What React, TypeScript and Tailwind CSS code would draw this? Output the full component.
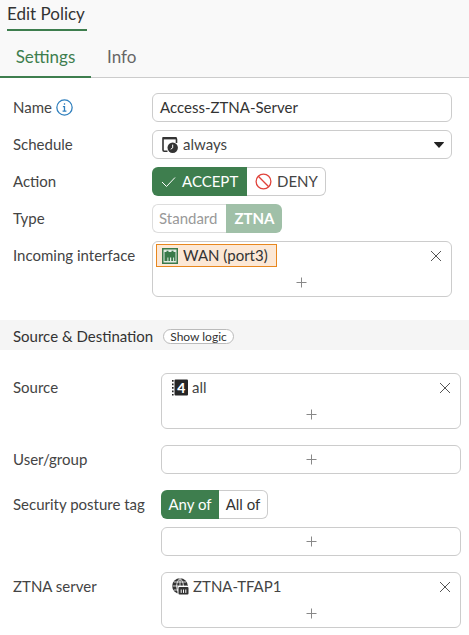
import React from 'react';

const labelCls = 'w-[139px] shrink-0 text-[15px] text-[#444]';
const boxCls = 'border border-[#ccc] rounded-[6px] bg-white';

const XIcon = () => (
  <svg width="12" height="12" viewBox="0 0 12 12" fill="none" stroke="#555" strokeWidth="1">
    <path d="M1 1l10 10M11 1L1 11" />
  </svg>
);

const PlusIcon = () => (
  <svg width="11" height="11" viewBox="0 0 11 11" fill="none" stroke="#888" strokeWidth="1">
    <path d="M5.5 0.5v10M0.5 5.5h10" />
  </svg>
);

const ClockIcon = () => (
  <svg width="16" height="17" viewBox="0 0 16 17">
    <path d="M5.5 15.2H2.2A1.2 1.2 0 0 1 1 14V2h12.3A1.2 1.2 0 0 1 14.5 3.2V7" fill="none" stroke="#333" strokeWidth="1.6" />
    <rect x="1" y="1" width="13.5" height="2.4" fill="#333" />
    <circle cx="10.7" cy="11.8" r="5.2" fill="#333" />
    <path d="M10.7 8.6v3.3l-2 1.3" fill="none" stroke="#fff" strokeWidth="1" />
  </svg>
);

const WanIcon = () => (
  <svg width="16" height="16" viewBox="0 0 16 16">
    <rect x="0.75" y="0.75" width="14.5" height="14.5" fill="#dfeae2" stroke="#3a7a4a" strokeWidth="1.5" />
    <path d="M2.5 4h2V2.8h2V4h3V2.8h2V4h2v9h-1.4V9.5h-1V13H9.2V9.5H8V13H6.4V9.5h-1V13H2.5z" fill="#3a7a4a" />
  </svg>
);

const AddressIcon = () => (
  <svg width="16" height="17" viewBox="0 0 16 17">
    <rect x="2.5" y="0.5" width="13.5" height="16" rx="1" fill="#262626" />
    <path d="M0.8 1v1.8M0.8 4.5v1.8M0.8 8v1.8M0.8 11.5v1.8M0.8 15v1.5" stroke="#262626" strokeWidth="1.6" />
    <text x="9.3" y="13.5" textAnchor="middle" fontSize="14" fontWeight="900" fill="#fff" fontFamily="Lato, sans-serif">4</text>
  </svg>
);

const ServerIcon = () => (
  <svg width="17" height="17" viewBox="0 0 17 17">
    <circle cx="8" cy="8" r="7.8" fill="#333" />
    <path d="M0.5 8h15M8 0.5v15M2 4h12M2 12h12M8 0.5C3.5 4 3.5 12 8 15.5M8 0.5c4.5 3.5 4.5 11.5 0 15" fill="none" stroke="#fff" strokeWidth="0.8" />
    <rect x="5.5" y="8" width="11.5" height="9" rx="1" fill="#fff" />
    <rect x="6.5" y="9" width="10" height="7.5" rx="1" fill="#333" />
    <path d="M9.2 11.5v3.4M11.5 11.5v3.4M13.8 11.5v3.4" stroke="#fff" strokeWidth="1" />
  </svg>
);

const Row = ({ label, children, className = '' }: { label: React.ReactNode; children: React.ReactNode; className?: string }) => (
  <div className={`flex items-start ${className}`}>
    <div className={`${labelCls} h-[29px] flex items-center`}>{label}</div>
    <div className="flex-1 min-w-0">{children}</div>
  </div>
);

const AddBox = ({ children, width = 'w-[300px]' }: { children?: React.ReactNode; width?: string }) => (
  <div className={`${boxCls} ${width} ${children ? 'h-[56px]' : 'h-[29px]'} relative flex flex-col`}>
    {children && (
      <div className="h-[27px] flex items-center justify-between pl-[10px] pr-[9px]">
        {children}
        <XIcon />
      </div>
    )}
    <div className="flex-1 flex items-center justify-center">
      <PlusIcon />
    </div>
  </div>
);

export default function App() {
  return (
    <div className="w-[469px] h-[635px] overflow-hidden bg-white font-['Lato',sans-serif] text-[15px] text-[#444]">
      <div className="bg-[#f9f9f9] h-[78px] border-b border-[#ccc] relative">
        <div className="h-[31px] pl-[7px]">
          <div className="w-[80px] h-[31px] border-b-2 border-[#3e7e4e] text-[17px] leading-[28px] text-[#333]">Edit Policy</div>
        </div>
        <div className="flex h-[47px]">
          <div className="w-[91px] h-[47px] border-b-2 border-[#3e7e4e] text-[#3e7e4e] text-[17px] text-center leading-[52px]">Settings</div>
          <div className="pl-[16px] text-[#666] text-[17px] leading-[52px]">Info</div>
        </div>
      </div>

      <div className="pl-[13px] pt-[15px] flex flex-col gap-[8px]">
        <Row label={
          <span className="flex items-center gap-[4px]">
            Name
            <svg width="17" height="17" viewBox="0 0 16 16" fill="none">
              <circle cx="8" cy="8" r="7.2" stroke="#2f7fbd" strokeWidth="1.2" />
              <path d="M8 4v1.4M6.5 7.2H8v4.3M6.2 11.5h3.6" stroke="#2f7fbd" strokeWidth="1.2" />
            </svg>
          </span>
        }>
          <div className={`${boxCls} w-[300px] h-[29px] flex items-center pl-[7px] text-[#333]`}>Access-ZTNA-Server</div>
        </Row>
        <Row label="Schedule">
          <div className={`${boxCls} w-[300px] h-[29px] flex items-center justify-between pl-[9px] pr-[7px]`}>
            <span className="flex items-center gap-[5px]"><ClockIcon />always</span>
            <svg width="10" height="6" viewBox="0 0 10 6"><path d="M0.5 0h9a0.5 0.5 0 0 1 0.3 0.8L5 6 0.2 0.8A0.5 0.5 0 0 1 0.5 0z" fill="#222" /></svg>
          </div>
        </Row>
        <Row label="Action">
          <div className="flex h-[29px] w-fit">
            <div className="w-[95px] bg-[#3e7e4e] rounded-l-[6px] text-white flex items-center pl-[9px] gap-[6px]">
              <svg width="15" height="12" viewBox="0 0 15 12" fill="none" stroke="#fff" strokeWidth="1"><path d="M1 6l4.5 4.5L14 1.5" /></svg>
              ACCEPT
            </div>
            <div className="w-[79px] border border-l-0 border-[#ccc] rounded-r-[6px] flex items-center pl-[8px] gap-[5px]">
              <svg width="17" height="17" viewBox="0 0 17 17" fill="none" stroke="#e0433b" strokeWidth="1.3"><circle cx="8.5" cy="8.5" r="7.4" /><path d="M3.3 3.3l10.4 10.4" /></svg>
              DENY
            </div>
          </div>
        </Row>
        <Row label="Type">
          <div className="flex h-[29px] w-fit">
            <div className="w-[74px] border border-r-0 border-[#ddd] rounded-l-[6px] text-[#999] flex items-center pl-[6px]">Standard</div>
            <div className="w-[56px] bg-[#a0c0a8] rounded-r-[6px] text-white font-bold flex items-center justify-center pl-px">ZTNA</div>
          </div>
        </Row>
        <Row label="Incoming interface">
          <div className={`${boxCls} w-[300px] h-[56px] flex flex-col`}>
            <div className="h-[27px] flex items-center justify-between pl-[3px] pr-[9px]">
              <span className="h-[23px] w-[121px] bg-[#fce8d6] border border-[#e8871e] flex items-center pl-[5px] gap-[5px] text-[#333]"><WanIcon />WAN (port3)</span>
              <XIcon />
            </div>
            <div className="flex-1 flex items-center justify-center pr-[2px]"><PlusIcon /></div>
          </div>
        </Row>
      </div>

      <div className="mt-[23px] h-[30px] bg-[#f5f5f5] pl-[13px] pt-[2px] flex items-center gap-[10px] text-[#333]">
        Source &amp; Destination
        <span className="h-[15px] px-[6px] border border-[#bbb] rounded-[8px] text-[12px] leading-[13px] bg-white">Show logic</span>
      </div>

      <div className="pl-[13px] pt-[23px] flex flex-col gap-[16px]">
        <Row label="Source" className="[&>div:first-child]:w-[148px]">
          <AddBox>
            <span className="flex items-center gap-[4px]"><AddressIcon />all</span>
          </AddBox>
        </Row>
        <Row label="User/group" className="[&>div:first-child]:w-[148px]">
          <AddBox />
        </Row>
        <div className="flex flex-col gap-[8px]">
          <Row label="Security posture tag" className="[&>div:first-child]:w-[148px]">
            <div className="flex h-[29px] w-fit">
              <div className="w-[58px] bg-[#3e7e4e] rounded-l-[6px] text-white flex items-center justify-center">Any of</div>
              <div className="w-[49px] border border-l-0 border-[#ccc] rounded-r-[6px] flex items-center justify-center text-[#333]">All of</div>
            </div>
          </Row>
          <div className="pl-[148px]"><AddBox /></div>
        </div>
        <Row label="ZTNA server" className="[&>div:first-child]:w-[148px]">
          <AddBox>
            <span className="flex items-center gap-[4px]"><ServerIcon />ZTNA-TFAP1</span>
          </AddBox>
        </Row>
      </div>
    </div>
  );
}
